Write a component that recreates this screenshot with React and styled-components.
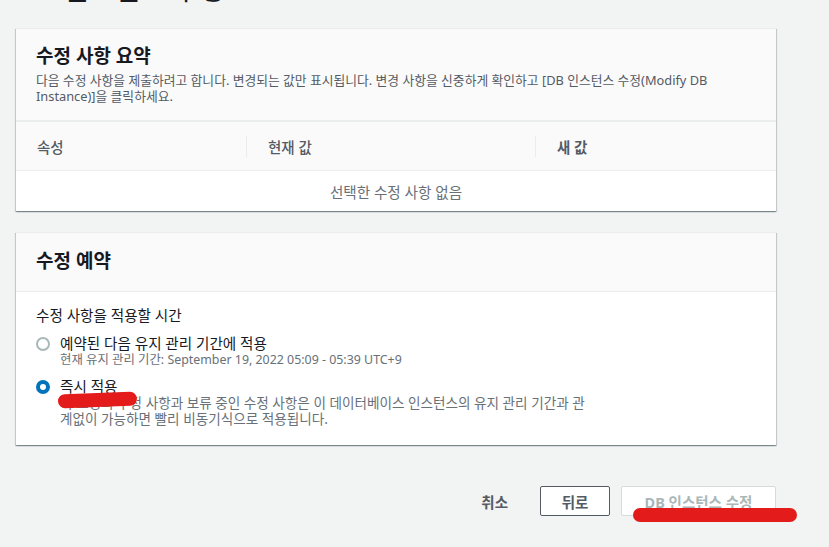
import React from 'react'
import styled, { createGlobalStyle } from 'styled-components'

const GlobalStyle = createGlobalStyle`
  html, body {
    margin: 0;
    padding: 0;
    background: #f2f3f3;
    overflow: hidden;
  }
  body {
    font-family: "Noto Sans", "Noto Sans CJK KR", sans-serif;
    color: #16191f;
  }
`

const Page = styled.div`
  width: 760px;
  padding-left: 16px;
  padding-bottom: 40px;
`

const PageTitle = styled.h1`
  margin: -28px 0 0 1px;
  font-size: 28px;
  line-height: 34px;
  font-weight: 400;
  color: #16191f;
  white-space: nowrap;
`

const Card = styled.section`
  background: #ffffff;
  box-shadow: 0 1px 1px 0 rgba(0, 28, 36, 0.3), 1px 1px 1px 0 rgba(0, 28, 36, 0.15), -1px 1px 1px 0 rgba(0, 28, 36, 0.15);
  border-top: 1px solid #eaeded;
  margin-top: ${p => p.$top}px;
`

const CardHeader = styled.div`
  background: #fafafa;
  padding: ${p => p.$pad};
  border-bottom: ${p => p.$line ? '1px solid #eaeded' : 'none'};
`

const CardTitle = styled.h2`
  margin: 0;
  font-size: 19px;
  line-height: 22px;
  font-weight: 700;
  color: #16191f;
`

const CardDesc = styled.p`
  margin: 5px 0 0;
  font-size: 12.8px;
  line-height: 16px;
  color: #545b64;
  padding-right: 30px;
`

const TableHead = styled.div`
  display: grid;
  grid-template-columns: 230px 289px 1fr;
  height: 48px;
  background: #fafafa;
  border-top: 2px solid #eaeded;
  border-bottom: 1px solid #eaeded;
`

const HeadCell = styled.div`
  display: flex;
  align-items: center;
  padding-left: 21px;
  font-size: 14.5px;
  font-weight: ${p => p.$bold ? 700 : 500};
  color: #545b64;
  border-left: ${p => p.$first ? 'none' : '1px solid #eaeded'};
  margin: ${p => p.$first ? 0 : '14px 0'};
`

const EmptyRow = styled.div`
  height: 40px;
  display: flex;
  align-items: center;
  justify-content: center;
  font-size: 14.6px;
  color: #687078;
`

const CardBody = styled.div`
  padding: 14px 20px 18px;
`

const FieldLabel = styled.div`
  font-size: 14.6px;
  line-height: 18px;
  color: #16191f;
  margin-bottom: 10px;
`

const RadioRow = styled.label`
  display: flex;
  gap: 10px;
  margin-bottom: ${p => p.$gap}px;
  position: relative;
`

const RadioDot = styled.span`
  flex: none;
  width: 14px;
  height: 14px;
  margin-top: 3px;
  border-radius: 50%;
  box-sizing: border-box;
  border: ${p => p.$on ? '4px solid #0073bb' : '2px solid #aab7b8'};
  background: #fff;
`

const RadioText = styled.div`
  display: flex;
  flex-direction: column;
`

const RadioLabel = styled.span`
  font-size: 14.6px;
  line-height: 18px;
  color: #16191f;
`

const RadioHint = styled.span`
  font-size: ${p => p.$size}px;
  line-height: 16px;
  color: #687078;
  max-width: 535px;
`

const Scribble = styled.span`
  position: absolute;
  left: ${p => p.$left}px;
  top: ${p => p.$top}px;
  width: ${p => p.$w}px;
  height: ${p => p.$h}px;
  background: #e31b1b;
  border-radius: 8px;
  transform: rotate(${p => p.$rot || 0}deg);
`

const Footer = styled.div`
  display: flex;
  justify-content: flex-end;
  align-items: center;
  margin-top: 41px;
  position: relative;
`

const LinkButton = styled.button`
  border: none;
  background: none;
  font-family: inherit;
  font-size: 14.5px;
  font-weight: 700;
  color: #545b64;
  padding: 0;
  margin-right: 32px;
  height: 30px;
`

const Button = styled.button`
  font-family: inherit;
  font-size: 14.5px;
  font-weight: 700;
  height: 30px;
  width: ${p => p.$w}px;
  margin-left: ${p => p.$ml}px;
  padding: 0;
  background: #ffffff;
  border: 1px solid ${p => p.$disabled ? '#d5dbdb' : '#545b64'};
  color: ${p => p.$disabled ? '#aab7b8' : '#545b64'};
  border-radius: 2px;
`

export default function App() {
  return (
    <>
      <GlobalStyle />
      <Page>
        <PageTitle>DB 인스턴스 수정: kaha-dev-db-oracle</PageTitle>

        <Card $top={22}>
          <CardHeader $pad="16px 20px 16px">
            <CardTitle>수정 사항 요약</CardTitle>
            <CardDesc>
              다음 수정 사항을 제출하려고 합니다. 변경되는 값만 표시됩니다. 변경 사항을 신중하게 확인하고 [DB 인스턴스 수정(Modify DB Instance)]을 클릭하세요.
            </CardDesc>
          </CardHeader>
          <TableHead>
            <HeadCell $first>속성</HeadCell>
            <HeadCell>현재 값</HeadCell>
            <HeadCell $bold>새 값</HeadCell>
          </TableHead>
          <EmptyRow>선택한 수정 사항 없음</EmptyRow>
        </Card>

        <Card $top={21}>
          <CardHeader $pad="17px 20px 19px" $line>
            <CardTitle>수정 예약</CardTitle>
          </CardHeader>
          <CardBody>
            <FieldLabel>수정 사항을 적용할 시간</FieldLabel>
            <RadioRow $gap={9}>
              <RadioDot />
              <RadioText>
                <RadioLabel>예약된 다음 유지 관리 기간에 적용</RadioLabel>
                <RadioHint $size={12.4}>현재 유지 관리 기간: September 19, 2022 05:09 - 05:39 UTC+9</RadioHint>
              </RadioText>
            </RadioRow>
            <RadioRow $gap={0}>
              <RadioDot $on />
              <RadioText>
                <RadioLabel>즉시 적용</RadioLabel>
                <RadioHint $size={13.6}>
                  이 요청의 수정 사항과 보류 중인 수정 사항은 이 데이터베이스 인스턴스의 유지 관리 기간과 관계없이 가능하면 빨리 비동기식으로 적용됩니다.
                </RadioHint>
              </RadioText>
              <Scribble $left={22} $top={16} $w={79} $h={14} $rot={-2} />
            </RadioRow>
          </CardBody>
        </Card>

        <Footer>
          <LinkButton>취소</LinkButton>
          <Button $w={70} $ml={0}>뒤로</Button>
          <Button $w={155} $ml={11} $disabled>DB 인스턴스 수정</Button>
          <Scribble $left={617} $top={22} $w={164} $h={14} />
        </Footer>
      </Page>
    </>
  )
}
